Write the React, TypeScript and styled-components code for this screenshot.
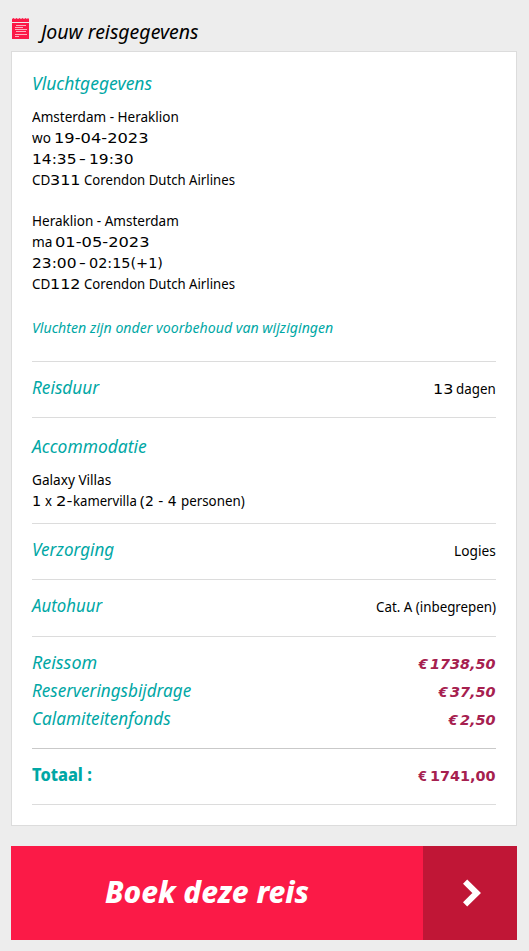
import React, { useLayoutEffect, useRef, useState } from 'react';
import styled, { createGlobalStyle } from 'styled-components';

const GlobalStyle = createGlobalStyle`
  body {
    margin: 0;
    background: #ededed;
    color: #000;
    font-family: 'Noto Sans', 'Open Sans', sans-serif;
  }
`;

const Page = styled.main`
  box-sizing: border-box;
  width: 529px;
  height: 951px;
  padding: 17px 12px 0 11px;
  background: #ededed;
  overflow: hidden;
`;

const Header = styled.header`
  display: flex;
  height: 34px;
`;

const HeaderIcon = styled.svg`
  display: block;
  flex: none;
  width: 17px;
  height: 22px;
  margin: 1px 12px 0 1px;
`;

const PageTitle = styled.h1`
  margin: 0;
  font-size: 19.5px;
  font-style: italic;
  font-weight: 400;
  line-height: 30px;
`;

const Card = styled.section`
  box-sizing: border-box;
  width: 506px;
  height: 775px;
  padding: 17px 20px 20px;
  background: #fff;
  border: 1px solid #dcdcdc;
`;

const Block = styled.div<{ $top: number; $bottom: number; $strong?: boolean }>`
  padding: ${p => p.$top}px 0 ${p => p.$bottom}px;
  border-bottom: 1px solid ${p => (p.$strong ? '#c9c9c9' : '#dcdcdc')};
`;

const Row = styled.div`
  display: flex;
  align-items: baseline;
  justify-content: space-between;
  height: 28px;
`;

const Heading = styled.h2<{ $bold?: boolean }>`
  margin: 0;
  height: 28px;
  color: #00a7a5;
  font-size: 18.5px;
  font-style: ${p => (p.$bold ? 'normal' : 'italic')};
  font-weight: ${p => (p.$bold ? 800 : 400)};
  line-height: 28px;
`;

const Lines = styled.div<{ $gap: number }>`
  margin-top: ${p => p.$gap}px;
`;

const Line = styled.div`
  display: flex;
  align-items: baseline;
  height: 21px;
  font-size: 15px;
  line-height: 21px;
`;

const Note = styled(Line)`
  margin-top: 23px;
  color: #00a7a5;
  font-style: italic;
`;

const Price = styled(Line)<{ $upright?: boolean }>`
  color: #a6204f;
  font-style: ${p => (p.$upright ? 'normal' : 'italic')};
  font-weight: 700;
`;

const BookButton = styled.button`
  display: flex;
  width: 506px;
  height: 94px;
  margin: 20px 0 0;
  padding: 0;
  border: 0;
  background: #fb1a47;
  color: #fff;
  font: italic 800 31px/91px 'Noto Sans', sans-serif;
`;

const ButtonLabel = styled.span`
  flex: 1;
  display: flex;
  justify-content: center;
  padding-right: 21px;
`;

const ButtonArrow = styled.span`
  display: flex;
  align-items: center;
  justify-content: center;
  box-sizing: border-box;
  width: 94px;
  height: 94px;
  padding-left: 4px;
  background: #c01636;
`;

const FitBox = styled.span<{ $width: number; $gap: number }>`
  display: block;
  width: ${p => p.$width}px;
  margin-left: ${p => p.$gap}px;
`;

const FitText = styled.span<{ $digits?: boolean }>`
  display: inline-block;
  white-space: pre;
  transform-origin: left;
  font-family: ${p => (p.$digits ? "'DejaVu Sans', sans-serif" : 'inherit')};
  font-size: ${p => (p.$digits ? '14.4px' : 'inherit')};
`;

type FitProps = { width: number; gap?: number; digits?: boolean; children: string };

/* Condenses or widens a run of text to the given width. */
function Fit({ width, gap = 0, digits, children }: FitProps) {
  const ref = useRef<HTMLSpanElement>(null);
  const [scale, setScale] = useState(1);
  useLayoutEffect(() => {
    if (ref.current) setScale(width / ref.current.offsetWidth);
  }, [width, children]);
  return (
    <FitBox $width={width} $gap={gap}>
      <FitText ref={ref} $digits={digits} style={{ transform: `scaleX(${scale})` }}>
        {children}
      </FitText>
    </FitBox>
  );
}

const prices = [
  { label: 'Reissom', labelWidth: 65, amount: '1738,50', width: 66 },
  { label: 'Reserveringsbijdrage', labelWidth: 159, amount: '37,50', width: 46 },
  { label: 'Calamiteitenfonds', labelWidth: 139, amount: '2,50', width: 36 },
];

export default function App() {
  return (
    <>
      <GlobalStyle />
      <Page>
        <Header>
          <HeaderIcon viewBox="0 0 17 22">
            <path
              fill="#fb1a47"
              d="M0 1L1.5 0L3 1L4.5 0L6 1L7.5 0L9 1L10.5 0L12 1L13.5 0L15 1L16 0L17 1V4H0ZM0 5H17V21H0Z"
            />
            <path stroke="#fff" strokeOpacity=".65" d="M4 7.5H14M3 9.5H11M3 11.5H15M4 13.5H14M3 16.5H15M3 18.5H7" />
          </HeaderIcon>
          <PageTitle>
            <Fit width={158}>Jouw reisgegevens</Fit>
          </PageTitle>
        </Header>

        <Card>
          <Block $top={0} $bottom={23}>
            <Heading><Fit width={120}>Vluchtgegevens</Fit></Heading>
            <Lines $gap={9}>
              <Line><Fit width={147}>Amsterdam - Heraklion</Fit></Line>
              <Line>
                <Fit width={19}>wo</Fit>
                <Fit digits gap={3} width={95}>19-04-2023</Fit>
              </Line>
              <Line>
                <Fit digits width={44}>14:35</Fit>
                <Fit gap={3} width={7}>-</Fit>
                <Fit digits gap={3} width={44}>19:30</Fit>
              </Line>
              <Line>
                <Fit width={18}>CD</Fit>
                <Fit digits width={30}>311</Fit>
                <Fit gap={4} width={151}>Corendon Dutch Airlines</Fit>
              </Line>
            </Lines>
            <Lines $gap={20}>
              <Line><Fit width={147}>Heraklion - Amsterdam</Fit></Line>
              <Line>
                <Fit width={20}>ma</Fit>
                <Fit digits gap={3} width={95}>01-05-2023</Fit>
              </Line>
              <Line>
                <Fit digits width={44}>23:00</Fit>
                <Fit gap={3} width={7}>-</Fit>
                <Fit digits gap={3} width={74}>02:15(+1)</Fit>
              </Line>
              <Line>
                <Fit width={18}>CD</Fit>
                <Fit digits width={30}>112</Fit>
                <Fit gap={4} width={151}>Corendon Dutch Airlines</Fit>
              </Line>
            </Lines>
            <Note><Fit width={301}>Vluchten zijn onder voorbehoud van wijzigingen</Fit></Note>
          </Block>

          <Block $top={11} $bottom={16}>
            <Row>
              <Heading><Fit width={67}>Reisduur</Fit></Heading>
              <Line>
                <Fit digits width={20}>13</Fit>
                <Fit gap={3} width={40}>dagen</Fit>
              </Line>
            </Row>
          </Block>

          <Block $top={14} $bottom={12}>
            <Heading><Fit width={115}>Accommodatie</Fit></Heading>
            <Lines $gap={9}>
              <Line><Fit width={79}>Galaxy Villas</Fit></Line>
              <Line>
                <Fit digits width={9}>1</Fit>
                <Fit gap={4} width={7}>x</Fit>
                <Fit digits gap={4} width={16}>2-</Fit>
                <Fit gap={1} width={64}>kamervilla</Fit>
                <Fit gap={3} width={5}>(</Fit>
                <Fit digits width={32}>2 - 4</Fit>
                <Fit gap={4} width={64}>personen)</Fit>
              </Line>
            </Lines>
          </Block>

          <Block $top={11} $bottom={16}>
            <Row>
              <Heading><Fit width={82}>Verzorging</Fit></Heading>
              <Line><Fit width={42}>Logies</Fit></Line>
            </Row>
          </Block>

          <Block $top={11} $bottom={17}>
            <Row>
              <Heading><Fit width={70}>Autohuur</Fit></Heading>
              <Line><Fit width={120}>Cat. A (inbegrepen)</Fit></Line>
            </Row>
          </Block>

          <Block $top={11} $bottom={16} $strong>
            {prices.map(({ label, labelWidth, amount, width }) => (
              <Row key={label}>
                <Heading><Fit width={labelWidth}>{label}</Fit></Heading>
                <Price>
                  <Fit width={9}>€</Fit>
                  <Fit digits gap={3} width={width}>{amount}</Fit>
                </Price>
              </Row>
            ))}
          </Block>

          <Block $top={11} $bottom={16}>
            <Row>
              <Heading $bold><Fit width={60}>Totaal :</Fit></Heading>
              <Price $upright>
                <Fit width={9}>€</Fit>
                <Fit digits gap={3} width={66}>1741,00</Fit>
              </Price>
            </Row>
          </Block>
        </Card>

        <BookButton>
          <ButtonLabel><Fit width={204}>Boek deze reis</Fit></ButtonLabel>
          <ButtonArrow>
            <svg width="18" height="28" viewBox="0 0 18 28">
              <path fill="none" stroke="#fff" strokeWidth="6" d="M2.1 2.6L13.7 14L2.1 25.4" />
            </svg>
          </ButtonArrow>
        </BookButton>
      </Page>
    </>
  );
}
